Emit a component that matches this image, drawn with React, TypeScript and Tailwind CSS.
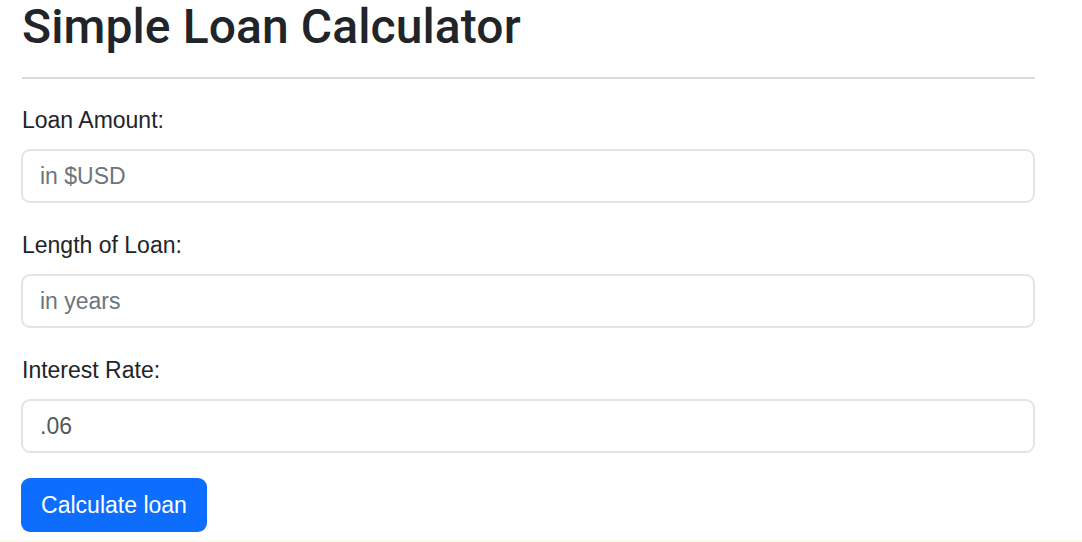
import React from "react";

export default function App() {
  const font = { fontFamily: '"Liberation Sans", Arial, Helvetica, sans-serif' };
  return (
    <div className="w-[1082px] h-[542px] bg-white text-[#212529] flex flex-col" style={font}>
      <div className="pl-[21px] w-[1035px] flex-1">
        <h1 className="text-[48px] leading-[53px] font-medium ml-[1px] font-['Roboto',sans-serif] tracking-[0.1px]">Simple Loan Calculator</h1>
        <div className="mt-[24px] ml-[1px] h-[2px] bg-[#dadbdc]" />
        <div className="mt-[24px]">
          <label className="block text-[23px] leading-[34px] mb-[12px] ml-[1px]">Loan Amount:</label>
          <input
            className="block w-full h-[54px] rounded-[9px] border-2 border-[#e2e5e7] px-[17px] text-[23px] text-[#495057] placeholder:text-[#6c757d] outline-none"
            placeholder="in $USD"
          />
        </div>
        <div className="mt-[25px]">
          <label className="block text-[23px] leading-[34px] mb-[12px] ml-[1px]">Length of Loan:</label>
          <input
            className="block w-full h-[54px] rounded-[9px] border-2 border-[#e2e5e7] px-[17px] text-[23px] text-[#495057] placeholder:text-[#6c757d] outline-none"
            placeholder="in years"
          />
        </div>
        <div className="mt-[25px]">
          <label className="block text-[23px] leading-[34px] mb-[12px] ml-[1px]">Interest Rate:</label>
          <input
            className="block w-full h-[54px] rounded-[9px] border-2 border-[#e2e5e7] px-[17px] text-[23px] text-[#54595e] outline-none"
            defaultValue=".06"
          />
        </div>
        <button className="mt-[25px] h-[54px] w-[186px] rounded-[9px] bg-[#0d6efd] text-white text-[23px] leading-none">
          Calculate loan
        </button>
      </div>
      <div className="h-[2px] w-full bg-[#fdfbec]" />
    </div>
  );
}
